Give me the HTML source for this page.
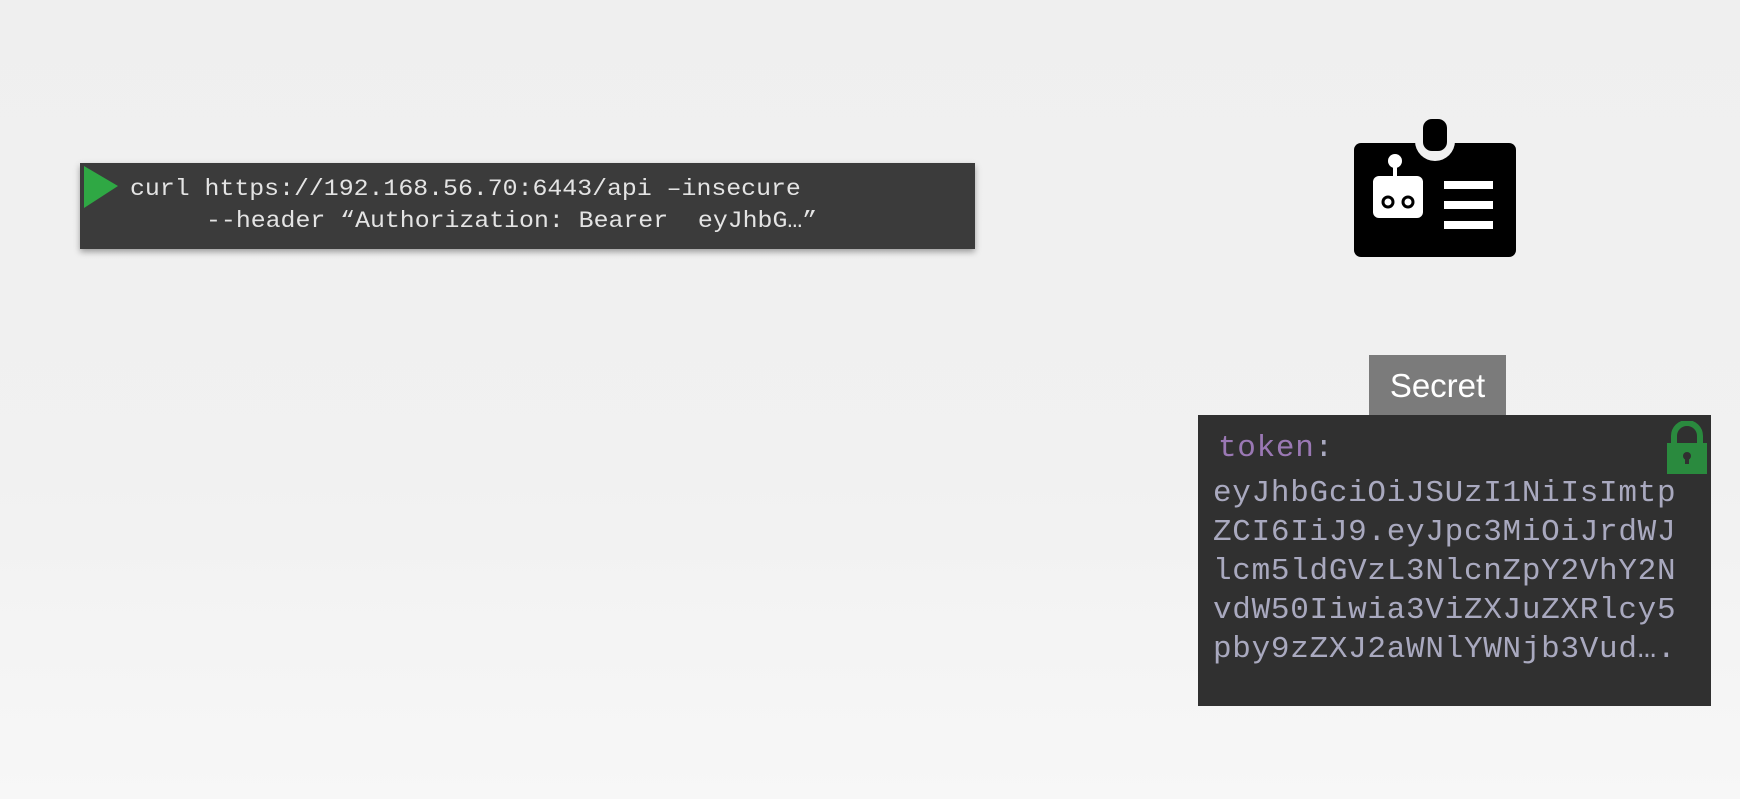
<!DOCTYPE html>
<html><head><style>
body{margin:0;width:1740px;height:799px;overflow:hidden;background:linear-gradient(180deg,#efefef 0%,#f1f1f1 60%,#f7f7f7 100%);position:relative;font-family:"Liberation Sans",sans-serif}
.cmd{position:absolute;left:80px;top:163px;width:895px;height:86px;background:#3b3b3b;box-shadow:0 3px 6px rgba(0,0,0,.35)}
.cmd .l{position:absolute;font-family:"Liberation Mono",monospace;font-size:23px;color:#e4e4e4;white-space:pre;transform:scaleX(1.08);transform-origin:left}
.sec{position:absolute;left:1369px;top:355px;width:137px;height:60px;background:#7b7b7b;color:#fff;font-size:33px;text-align:center;line-height:62px}
.box{position:absolute;left:1198px;top:415px;width:513px;height:291px;background:#303030}
.box .t{position:absolute;left:15px;font-family:"Liberation Mono",monospace;font-size:31px;color:#a9a9bf;white-space:pre;letter-spacing:0.7px}
</style></head><body>
<div class="cmd">
<svg style="position:absolute;left:4px;top:3px" width="36" height="44"><polygon points="0,0 34,20 0,42" fill="#2fa844"/></svg>
<div class="l" style="left:50px;top:13px">curl https://192.168.56.70:6443/api –insecure</div>
<div class="l" style="left:126px;top:45px">--header “Authorization: Bearer  eyJhbG…”</div>
</div>
<svg style="position:absolute;left:1353px;top:119px" width="164" height="140" viewBox="0 0 164 140">
<rect x="1" y="24" width="162" height="114" rx="7" fill="#000"/>
<circle cx="82" cy="22" r="20" fill="#f0f0f0"/>
<rect x="70" y="0" width="24" height="32" rx="9" fill="#000"/>
<rect x="20" y="57" width="50" height="42" rx="6" fill="#fff"/>
<rect x="40" y="44" width="4" height="14" fill="#fff"/>
<circle cx="42" cy="42" r="7" fill="#fff"/>
<circle cx="35" cy="83" r="5" fill="none" stroke="#000" stroke-width="3"/>
<circle cx="55" cy="83" r="5" fill="none" stroke="#000" stroke-width="3"/>
<rect x="91" y="62" width="49" height="8" fill="#fff"/>
<rect x="91" y="82" width="49" height="8" fill="#fff"/>
<rect x="91" y="102" width="49" height="8" fill="#fff"/>
</svg>
<div class="sec">Secret</div>
<div class="box">
<div class="t" style="left:20px;top:16px"><span style="color:#9a78b4">token</span>:</div>
<div class="t" style="top:61px">eyJhbGciOiJSUzI1NiIsImtp</div>
<div class="t" style="top:100px">ZCI6IiJ9.eyJpc3MiOiJrdWJ</div>
<div class="t" style="top:139px">lcm5ldGVzL3NlcnZpY2VhY2N</div>
<div class="t" style="top:178px">vdW50Iiwia3ViZXJuZXRlcy5</div>
<div class="t" style="top:217px">pby9zZXJ2aWNlYWNjb3Vud….</div>
<svg style="position:absolute;left:467px;top:6px" width="44" height="54" viewBox="0 0 44 54">
<path d="M9 24 V15 a13 13 0 0 1 26 0 V24" fill="none" stroke="#2a8a3e" stroke-width="6"/>
<rect x="2" y="22" width="40" height="31" fill="#2a8a3e"/>
<circle cx="22" cy="35" r="4" fill="#303030"/><rect x="20" y="35" width="4" height="8" fill="#303030"/>
</svg>
</div>
</body></html>
